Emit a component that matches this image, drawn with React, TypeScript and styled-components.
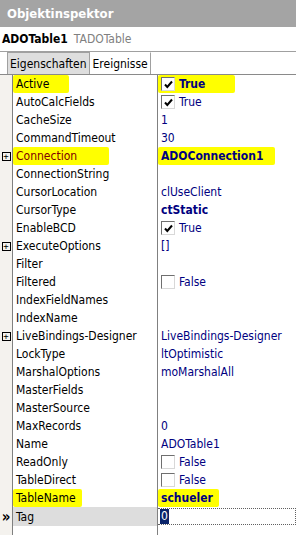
import styled, { createGlobalStyle } from "styled-components";

const GlobalStyle = createGlobalStyle`
  body {
    margin: 0;
    background: #fff;
    font-family: "DejaVu Sans Condensed", "Liberation Sans", sans-serif;
    font-size: 12px;
  }
`;

type Prop = {
  name: string;
  value?: string;
  expand?: boolean;
  check?: boolean;
  bold?: boolean;
  red?: boolean;
  markName?: number;
  markValue?: number;
};

const props: Prop[] = [
  { name: "Active", value: "True", check: true, bold: true, markName: 20, markValue: 30 },
  { name: "AutoCalcFields", value: "True", check: true },
  { name: "CacheSize", value: "1" },
  { name: "CommandTimeout", value: "30" },
  { name: "Connection", value: "ADOConnection1", expand: true, red: true, bold: true, markName: 32, markValue: 12 },
  { name: "ConnectionString" },
  { name: "CursorLocation", value: "clUseClient" },
  { name: "CursorType", value: "ctStatic", bold: true },
  { name: "EnableBCD", value: "True", check: true },
  { name: "ExecuteOptions", value: "[]", expand: true },
  { name: "Filter" },
  { name: "Filtered", value: "False", check: false },
  { name: "IndexFieldNames" },
  { name: "IndexName" },
  { name: "LiveBindings-Designer", value: "LiveBindings-Designer", expand: true },
  { name: "LockType", value: "ltOptimistic" },
  { name: "MarshalOptions", value: "moMarshalAll" },
  { name: "MasterFields" },
  { name: "MasterSource" },
  { name: "MaxRecords", value: "0" },
  { name: "Name", value: "ADOTable1" },
  { name: "ReadOnly", value: "False", check: false },
  { name: "TableDirect", value: "False", check: false },
  { name: "TableName", value: "schueler", bold: true, markName: 6, markValue: 6 },
];

function Check({ on }: { on: boolean }) {
  return (
    <CheckBox>
      {on && (
        <svg width="9" height="9" viewBox="0 0 9 9">
          <path d="M1 4.5 L3.3 7 L8 1.5" fill="none" stroke="#000" strokeWidth="2" />
        </svg>
      )}
    </CheckBox>
  );
}

function App() {
  return (
    <Window>
      <GlobalStyle />
      <TitleBar>Objektinspektor</TitleBar>
      <ComponentRow>
        <CompName>ADOTable1</CompName>
        <CompType>TADOTable</CompType>
      </ComponentRow>
      <TabBar>
        <Tab $active>Eigenschaften</Tab>
        <Tab>Ereignisse</Tab>
      </TabBar>
      <Grid>
        {props.map((p) => (
          <Row key={p.name}>
            <Gutter>{p.expand && <PlusBox>+</PlusBox>}</Gutter>
            <NameCell $red={p.red}>
              {p.markName !== undefined ? <Marker $extra={p.markName}>{p.name}</Marker> : p.name}
            </NameCell>
            <ValueCell $bold={p.bold}>
              {p.markValue !== undefined ? (
                <Marker $extra={p.markValue}>
                  {p.check !== undefined && <Check on={p.check} />}
                  {p.value}
                </Marker>
              ) : (
                <>
                  {p.check !== undefined && <Check on={p.check} />}
                  {p.value}
                </>
              )}
            </ValueCell>
          </Row>
        ))}
        <Row>
          <Gutter>
            <Pointer>»</Pointer>
          </Gutter>
          <NameCell $selected>Tag</NameCell>
          <EditCell>
            <Selected>0</Selected>
          </EditCell>
        </Row>
        <Filler>
          <Gutter />
          <NameCell />
        </Filler>
      </Grid>
    </Window>
  );
}

const Window = styled.div`
  width: 296px;
  height: 535px;
  overflow: hidden;
  display: flex;
  flex-direction: column;
  background: #fff;
`;

const TitleBar = styled.div`
  height: 27px;
  flex: none;
  display: flex;
  align-items: center;
  padding-left: 7px;
  background: #a4a4a4;
  color: #fff;
  font-weight: bold;
  font-size: 13px;
`;

const ComponentRow = styled.div`
  height: 24px;
  flex: none;
  display: flex;
  align-items: center;
  gap: 6px;
  padding-left: 2px;
`;

const CompName = styled.span`
  font-weight: bold;
  color: #000;
`;

const CompType = styled.span`
  color: #808080;
`;

const TabBar = styled.div`
  height: 22px;
  flex: none;
  display: flex;
  align-items: flex-end;
  padding-left: 7px;
  border-top: 1px solid #a0a0a0;
  border-bottom: 1px solid #8a8a8a;
`;

const Tab = styled.div<{ $active?: boolean }>`
  height: 20px;
  display: flex;
  align-items: center;
  padding: 1px 2px 0 2px;
  color: #000;
  background: ${(p) => (p.$active ? "#dedede" : "transparent")};
  border: 1px solid ${(p) => (p.$active ? "#a0a0a0" : "transparent")};
  border-bottom: none;
  border-right: 1px solid #a0a0a0;
`;

const Grid = styled.div`
  flex: 1;
  display: flex;
  flex-direction: column;
`;

const Row = styled.div`
  height: 18px;
  flex: none;
  display: grid;
  grid-template-columns: 13px 145px 1fr;
`;

const Filler = styled.div`
  flex: 1;
  display: grid;
  grid-template-columns: 13px 145px 1fr;
`;

const Gutter = styled.div`
  background: #f4f2ee;
  border-right: 1px solid #808080;
  display: flex;
  align-items: center;
  justify-content: center;
`;

const PlusBox = styled.span`
  width: 7px;
  height: 7px;
  border: 1px solid #000;
  font-size: 9px;
  line-height: 7px;
  text-align: center;
  font-family: "DejaVu Sans Mono", monospace;
  color: #000;
`;

const Pointer = styled.span`
  font-size: 15px;
  line-height: 14px;
  font-weight: bold;
  color: #000;
`;

const NameCell = styled.div<{ $red?: boolean; $selected?: boolean }>`
  display: flex;
  align-items: center;
  padding-left: 3px;
  border-right: 1px solid #808080;
  color: ${(p) => (p.$red ? "#800000" : "#000")};
  background: ${(p) => (p.$selected ? "#dddddd" : "transparent")};
  white-space: nowrap;
  overflow: hidden;
`;

const ValueCell = styled.div<{ $bold?: boolean }>`
  display: flex;
  align-items: center;
  padding-left: 3px;
  color: #000080;
  font-weight: ${(p) => (p.$bold ? "bold" : "normal")};
  white-space: nowrap;
  overflow: hidden;
`;

const EditCell = styled.div`
  display: flex;
  align-items: center;
  padding-left: 2px;
  margin: 1px 0;
  border: 1px dotted #606060;
  border-left: none;
`;

const Selected = styled.span`
  background: #0a246a;
  color: #fff;
  padding: 0 1px;
  line-height: 15px;
`;

const Marker = styled.span<{ $extra: number }>`
  display: inline-flex;
  align-items: center;
  background: #ffff00;
  margin: -2px 0 -2px -3px;
  padding: 2px ${(p) => p.$extra}px 2px 3px;
  border-radius: 2px;
`;

const CheckBox = styled.span`
  width: 12px;
  height: 12px;
  margin-right: 4px;
  display: inline-flex;
  align-items: center;
  justify-content: center;
  background: #fff;
  border: 1px solid;
  border-color: #6f6f6f #d8d8d8 #d8d8d8 #6f6f6f;
`;

export default App;
